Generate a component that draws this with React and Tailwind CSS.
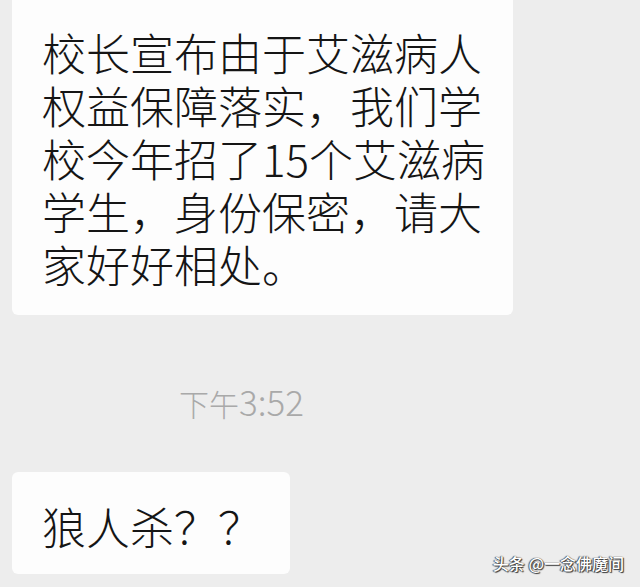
import React from 'react';

const lines = [
  '校长宣布由于艾滋病人',
  '权益保障落实，我们学',
  '校今年招了15个艾滋病',
  '学生，身份保密，请大',
  '家好好相处。',
];

const App = () => {
  return (
    <div
      className="relative w-[640px] h-[587px] overflow-hidden bg-[#ededed]"
      style={{ fontFamily: '"Noto Sans CJK SC", "Noto Sans", sans-serif' }}
    >
      {/* Message */}
      <div className="ml-[12px] w-[501px] rounded-b-md bg-[#fdfdfd] pl-[30px] pt-[26px] pb-[24px] text-[44px] font-light leading-[53px] text-[#151515]">
        {lines.map((line) => (
          <div key={line} className="h-[53px] whitespace-nowrap">
            {line}
          </div>
        ))}
      </div>

      {/* Time */}
      <div className="ml-[179px] mt-[66px] flex items-baseline h-[40px] font-light leading-[40px] text-[#a9a9a9]">
        <span className="text-[30px]">下午</span>
        <span className="text-[35px]">3:52</span>
      </div>

      {/* Reply */}
      <div className="ml-[12px] mt-[51px] w-[278px] rounded-md bg-[#fdfdfd] pl-[30px] pt-[28px] pb-[21px] text-[44px] font-light leading-[53px] text-[#151515]">
        狼人杀？？
      </div>

      {/* Watermark */}
      <div
        className="absolute right-[16px] bottom-[14px] text-[16px] font-medium leading-[20px] text-white"
        style={{ textShadow: '0 0 1px #333, 1px 1px 1px #333, -1px 0 1px #555' }}
      >
        头条 @一念佛魔间
      </div>
    </div>
  );
};

export default App;
